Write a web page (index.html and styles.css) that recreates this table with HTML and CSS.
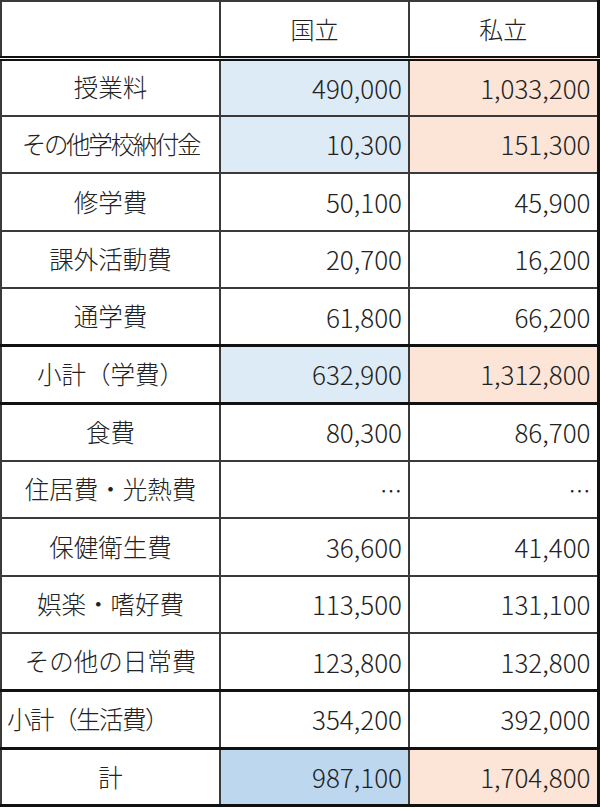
FILE: index.html
```html
<!DOCTYPE html>
<html lang="ja">
<head>
<meta charset="utf-8">
<title>学費・生活費</title>
<link rel="stylesheet" href="styles.css">
</head>
<body>
<table class="cost">
  <colgroup>
    <col class="c-label">
    <col class="c-num">
    <col class="c-num">
  </colgroup>
  <thead>
    <tr class="head">
      <th></th>
      <th>国立</th>
      <th>私立</th>
    </tr>
  </thead>
  <tbody>
    <tr>
      <td class="label">授業料</td>
      <td class="num blue">490,000</td>
      <td class="num orange">1,033,200</td>
    </tr>
    <tr>
      <td class="label tight">その他学校納付金</td>
      <td class="num blue">10,300</td>
      <td class="num orange">151,300</td>
    </tr>
    <tr>
      <td class="label">修学費</td>
      <td class="num">50,100</td>
      <td class="num">45,900</td>
    </tr>
    <tr>
      <td class="label">課外活動費</td>
      <td class="num">20,700</td>
      <td class="num">16,200</td>
    </tr>
    <tr class="before-thick">
      <td class="label">通学費</td>
      <td class="num">61,800</td>
      <td class="num">66,200</td>
    </tr>
    <tr class="thick">
      <td class="label">小計（学費）</td>
      <td class="num blue">632,900</td>
      <td class="num orange">1,312,800</td>
    </tr>
    <tr>
      <td class="label">食費</td>
      <td class="num">80,300</td>
      <td class="num">86,700</td>
    </tr>
    <tr>
      <td class="label">住居費・光熱費</td>
      <td class="num dots">…</td>
      <td class="num dots">…</td>
    </tr>
    <tr>
      <td class="label">保健衛生費</td>
      <td class="num">36,600</td>
      <td class="num">41,400</td>
    </tr>
    <tr>
      <td class="label">娯楽・嗜好費</td>
      <td class="num">113,500</td>
      <td class="num">131,100</td>
    </tr>
    <tr class="before-thick">
      <td class="label">その他の日常費</td>
      <td class="num">123,800</td>
      <td class="num">132,800</td>
    </tr>
    <tr class="thick">
      <td class="label left">小計（生活費）</td>
      <td class="num">354,200</td>
      <td class="num">392,000</td>
    </tr>
    <tr class="total">
      <td class="label">計</td>
      <td class="num blue-dark">987,100</td>
      <td class="num orange">1,704,800</td>
    </tr>
  </tbody>
</table>
</body>
</html>
```

FILE: styles.css
```css
html, body {
  margin: 0;
  padding: 0;
  background: #ffffff;
}

.cost {
  border-collapse: collapse;
  table-layout: fixed;
  width: 598px;
  font-family: "Noto Sans CJK JP", "Noto Sans", sans-serif;
  font-weight: 300;
  font-size: 24px;
  color: #222222;
  border-left: 2px solid #111;
  border-right: 3px solid #111;
  border-top: 2px solid #111;
  border-bottom: 3px solid #111;
}

.c-label { width: 219px; }
.c-num { width: 189px; }

.cost th,
.cost td {
  border: 2px solid #3a3a3a;
  padding: 0 6px;
  height: 57.5px;
  line-height: 1;
  font-weight: 300;
  white-space: nowrap;
  vertical-align: middle;
  box-sizing: border-box;
}

.cost .head th {
  height: 57px;
  text-align: center;
  border-bottom: 5px double #111;
}

.label {
  text-align: center;
  font-size: 24.5px;
}

.label.tight {
  letter-spacing: -2.3px;
}

.label.left {
  text-align: left;
  padding-left: 5px;
  letter-spacing: -1.5px;
}

.num {
  text-align: right;
  font-size: 26px;
  padding-right: 6px;
}

.num.dots {
  font-size: 22px;
}

.before-thick td {
  border-bottom: 3px solid #111;
}

.thick td {
  border-top: 3px solid #111;
  border-bottom: 3px solid #111;
}

.total td {
  border-top: 3px solid #111;
}

.blue { background: #ddebf7; }
.blue-dark { background: #bdd7ee; }
.orange { background: #fce4d6; }
```
